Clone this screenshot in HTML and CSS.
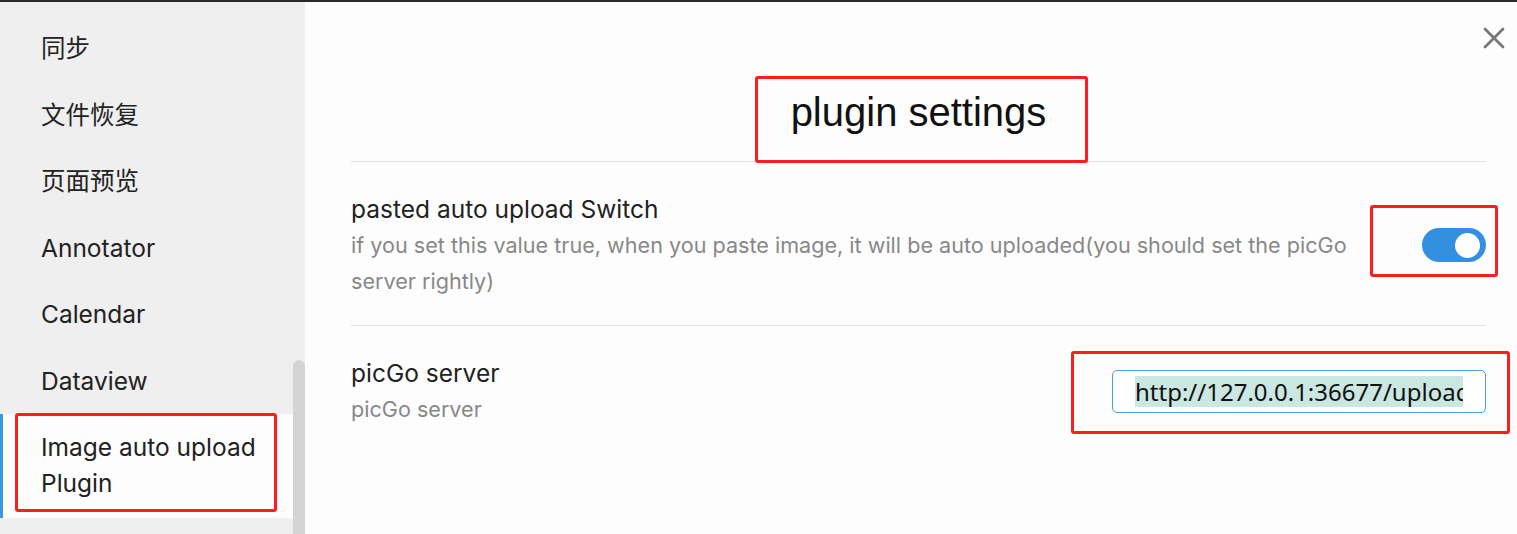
FILE: index.html
```html
<!DOCTYPE html>
<html>
<head>
<meta charset="utf-8">
<link rel="stylesheet" href="styles.css">
</head>
<body>
<div class="app">
  <aside class="sidebar">
    <nav class="nav">
      <div class="nav-item">同步</div>
      <div class="nav-item">文件恢复</div>
      <div class="nav-item">页面预览</div>
      <div class="nav-item">Annotator</div>
      <div class="nav-item">Calendar</div>
      <div class="nav-item">Dataview</div>
      <div class="nav-item active">Image auto upload Plugin<span class="mark mark-nav"></span></div>
    </nav>
    <div class="scroll-track"><div class="scroll-thumb"></div></div>
  </aside>
  <main class="content">
    <button class="close" aria-label="close">
      <svg width="22" height="22" viewBox="0 0 22 22"><path d="M2 2 L20 20 M20 2 L2 20" stroke="#777" stroke-width="2.8" stroke-linecap="round"/></svg>
    </button>
    <header class="head">
      <h2 class="title">plugin settings<span class="mark mark-title"></span></h2>
    </header>
    <div class="setting">
      <div class="info">
        <div class="name">pasted auto upload Switch</div>
        <div class="desc">if you set this value true, when you paste image, it will be auto uploaded(you should set the picGo server rightly)</div>
      </div>
      <div class="control">
        <div class="toggle"><div class="knob"></div><span class="mark mark-toggle"></span></div>
      </div>
    </div>
    <div class="setting">
      <div class="info">
        <div class="name">picGo server</div>
        <div class="desc">picGo server</div>
      </div>
      <div class="control">
        <div class="input"><span class="sel">http://127.0.0.1:36677/upload</span><span class="mark mark-input"></span></div>
      </div>
    </div>
  </main>
</div>
</body>
</html>
```

FILE: styles.css
```css
* { box-sizing: border-box; }
html, body { margin: 0; padding: 0; }
body {
  width: 1517px;
  height: 534px;
  overflow: hidden;
  font-family: Inter, "Noto Sans CJK SC", sans-serif;
  color: #222;
  border-top: 2px solid #2a2a2a;
  background: #fdfdfd;
}
.app {
  display: flex;
  height: 532px;
}
.sidebar {
  width: 305px;
  flex: none;
  background: #efefef;
  display: flex;
}
.nav {
  flex: 1;
  padding-top: 13px;
}
.nav-item {
  position: relative;
  font-size: 24.5px;
  line-height: 36px;
  padding: 15px 20px 15.5px 41px;
  color: #222;
}
.nav-item.active {
  background: #fdfdfd;
  border-left: 3px solid #3a97e8;
  padding-left: 38px;
  padding-top: 15px;
  padding-bottom: 17px;
}
.scroll-track {
  width: 12px;
  flex: none;
  padding-top: 358px;
}
.scroll-thumb {
  height: 200px;
  background: #d4d4d4;
  border-radius: 6px 6px 0 0;
}
.content {
  position: relative;
  flex: 1;
  padding: 0 31px 0 46px;
  background: #fdfdfd;
}
.close {
  position: absolute;
  top: 25px;
  right: 12px;
  border: 0;
  padding: 0;
  background: none;
  width: 22px;
  height: 22px;
}
.close svg { display: block; }
.head {
  padding: 90px 0 29px;
  border-bottom: 1px solid #e2e2e2;
  text-align: center;
}
.title {
  position: relative;
  display: inline-block;
  margin: 0;
  font-family: "Liberation Sans", Arial, sans-serif;
  font-weight: normal;
  font-size: 40px;
  line-height: 40px;
  color: #111;
}
.setting {
  display: flex;
  align-items: center;
  padding: 29px 0 26px;
  border-bottom: 1px solid #e2e2e2;
}
.setting:last-child { border-bottom: 0; }
.info {
  flex: 1;
  min-width: 0;
  margin-right: 30px;
}
.name {
  font-size: 24.5px;
  line-height: 36px;
  color: #222;
}
.desc {
  font-size: 21.6px;
  line-height: 36px;
  color: #888;
}
.control {
  flex: none;
  display: flex;
  justify-content: flex-end;
}
.toggle {
  position: relative;
  width: 64px;
  height: 34px;
  border-radius: 17px;
  background: #3390e0;
  display: flex;
  align-items: center;
  justify-content: flex-end;
  padding-right: 6px;
}
.knob {
  width: 25px;
  height: 25px;
  border-radius: 50%;
  background: #fff;
}
.input {
  position: relative;
  width: 374px;
  height: 43px;
  border: 1px solid #4c9ce6;
  border-radius: 5px;
  background: #fff;
  padding: 0 22px;
  display: flex;
  align-items: center;
  white-space: nowrap;
}
.sel {
  display: block;
  flex: 1;
  min-width: 0;
  overflow: hidden;
  font-family: "Noto Sans", sans-serif;
  font-size: 24px;
  line-height: 31px;
  background: #cbe7e1;
  color: #111;
}
.mark {
  position: absolute;
  border: 3px solid #ff1e1e;
  border-radius: 3px;
  pointer-events: none;
}
.mark-nav { left: 12px; top: -1px; width: 262px; height: 99px; }
.mark-title { left: -36px; top: -16px; width: 333px; height: 87px; }
.mark-toggle { left: -52px; top: -23px; width: 128px; height: 72px; }
.mark-input { left: -42px; top: -20px; width: 439px; height: 83px; }
```
